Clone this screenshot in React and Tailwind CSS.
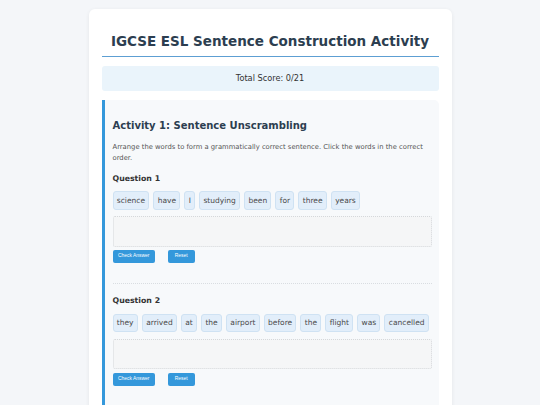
import React from "react";

const q1 = ["science", "have", "I", "studying", "been", "for", "three", "years"];
const q2 = ["they", "arrived", "at", "the", "airport", "before", "the", "flight", "was", "cancelled"];

function Question({ n, words, first }) {
  return (
    <div className={(first ? "mt-[9.8px]" : "mt-[12.3px]") + " pb-[20px] border-b border-dotted border-[#d9dde1]"}>
      <div className="text-[7.8px] leading-[9px] font-bold text-[#333]">Question {n}</div>
      <div className="mt-[8.8px] flex flex-wrap gap-[4px]">
        {words.map((w, i) => (
          <div
            key={i}
            className="h-[18.3px] px-[3.3px] flex items-center border border-[#cfe2f3] bg-[#e2eefa] rounded-[3px] text-[7.5px] text-[#4a4a4a]"
          >
            {w}
          </div>
        ))}
      </div>
      <div className="mt-[6.5px] h-[30.6px] border border-dotted border-[#d5d8db] bg-[#f5f6f7] rounded-[2px]"></div>
      <div className="mt-[3.5px] flex gap-[13px]" style={{ fontFamily: '"Liberation Sans", Arial, sans-serif' }}>
        <button className="h-[12.7px] px-[5.5px] bg-[#3498db] text-white text-[4.9px] rounded-[2px] leading-none">
          Check Answer
        </button>
        <button className="h-[12.7px] px-[7px] bg-[#3498db] text-white text-[4.9px] rounded-[2px] leading-none">
          Reset
        </button>
      </div>
    </div>
  );
}

export default function App() {
  return (
    <div
      className="min-h-screen bg-[#f4f6f9] pt-[9px] overflow-hidden"
      style={{ fontFamily: '"DejaVu Sans", Verdana, sans-serif', height: 405 }}
    >
      <div className="mx-auto w-[363px] bg-white rounded-[6px] shadow-[0_1px_4px_rgba(0,0,0,0.07)] px-[13px] pt-[24px] pb-[20px]">
        <h1 className="text-center text-[13.5px] leading-[17px] font-bold text-[#2c3e50] pb-[6px] border-b border-[#5d9fd3]">
          IGCSE ESL Sentence Construction Activity
        </h1>
        <div className="mt-[9px] h-[25px] flex items-center justify-center bg-[#eaf4fb] rounded-[3px] text-[8.2px] text-[#333]">
          Total Score: 0/21
        </div>
        <div className="mt-[9px] border-l-[3px] border-[#3498db] bg-[#f7f9fb] rounded-r-[5px] pl-[8px] pr-[7px] pt-[19.5px] pb-[20px]">
          <h2 className="text-[10px] leading-[12px] font-bold text-[#2c3e50]">Activity 1: Sentence Unscrambling</h2>
          <p className="mt-[10.8px] text-[6.8px] leading-[10.7px] text-[#555]">
            Arrange the words to form a grammatically correct sentence. Click the words in the correct order.
          </p>
          <Question n={1} words={q1} first />
          <Question n={2} words={q2} />
        </div>
      </div>
    </div>
  );
}
